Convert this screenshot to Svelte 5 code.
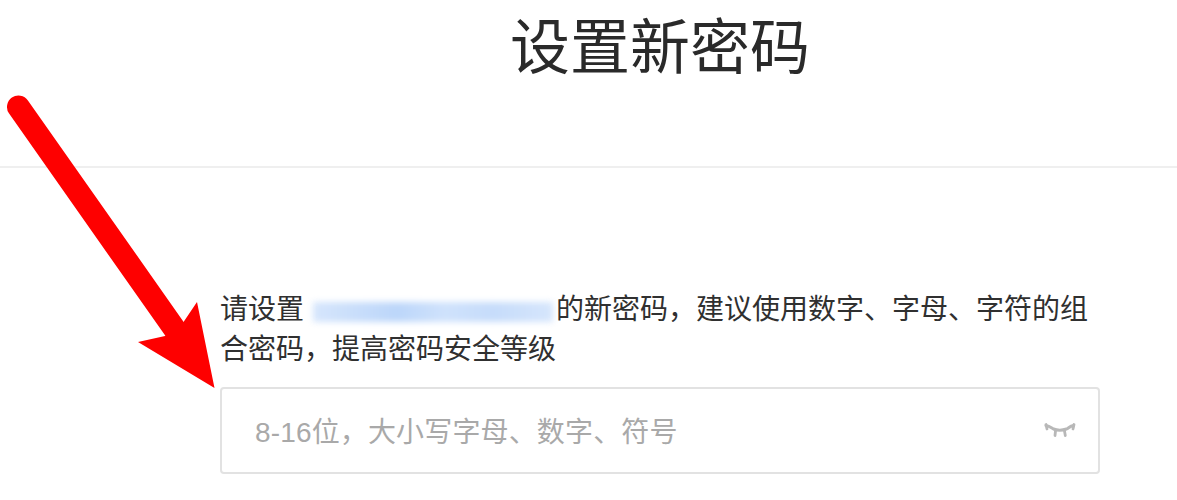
<script>
	const hint = '8-16位，大小写字母、数字、符号';
</script>

<div class="page">
	<header>
		<h1>设置新密码</h1>
	</header>

	<main>
		<p>
			请设置<span class="blur"></span>的新密码，建议使用数字、字母、字符的组合密码，提高密码安全等级
		</p>
		<div class="field">
			<span class="hint">{hint}</span>
			<svg class="eye" width="34" height="18" viewBox="0 0 34 18" fill="none">
				<path d="M3 3.500c3 .5 5 2 7.500 3.500 4 1.500 8.500 1.500 13 0 2.500-1.500 4-3 7-3.500" stroke="#b8b8b8" stroke-width="3" stroke-linecap="round" />
				<path d="M12.500 9l-.5 4.500M21.500 9l.8 4.500M3 2.500l1 4.500M31 2.500l-1 4.500" stroke="#b8b8b8" stroke-width="2.800" stroke-linecap="round" />
			</svg>
		</div>
	</main>

	<!-- red annotation arrow on top of the page -->
	<svg class="arrow" width="230" height="400" viewBox="0 0 230 400">
		<path d="M18.500 107L176 331" stroke="#fe0000" stroke-width="23" stroke-linecap="round" />
		<path d="M214.500 388L197 302L181.500 325L165 336L138 342Z" fill="#fe0000" />
	</svg>
</div>

<style>
	:global(body) {
		background: #fff;
	}

	.page {
		position: relative;
		width: 1177px;
		height: 500px;
		overflow: hidden;
		font-family: 'Liberation Sans', 'Noto Sans CJK SC', sans-serif;
		color: #303030;
	}

	header {
		height: 168px;
		box-sizing: border-box;
		padding-left: 143px;
		border-bottom: 2px solid #efefef;
		text-align: center;
	}

	h1 {
		margin: 0;
		padding-top: 13px;
		font-size: 60px;
		line-height: 72px;
		font-weight: 400;
		color: #2a2a2a;
	}

	main {
		width: 880px;
		margin-left: 220px;
		padding-top: 122px;
	}

	p {
		margin: 0 0 17px;
		font-size: 28px;
		line-height: 40px;
	}

	.blur {
		display: inline-block;
		width: 240px;
		height: 20px;
		margin: 0 3px 0 9px;
		vertical-align: -3px;
		background: linear-gradient(90deg, #d6e6fc, #bcd6fa 35%, #cfe2fc 55%, #c6dcfb 75%, #d6e6fc);
		filter: blur(3px);
	}

	.field {
		height: 87px;
		box-sizing: border-box;
		display: flex;
		align-items: center;
		justify-content: space-between;
		padding: 0 21px 0 33px;
		border: 2px solid #e2e2e2;
		border-radius: 4px;
	}

	.hint {
		margin-top: -2px;
		font-size: 28px;
		letter-spacing: 0.15px;
		color: #a9a9a9;
	}

	.eye {
		margin-top: 1px;
	}

	.arrow {
		position: absolute;
		left: 0;
		top: 0;
		pointer-events: none;
	}
</style>
